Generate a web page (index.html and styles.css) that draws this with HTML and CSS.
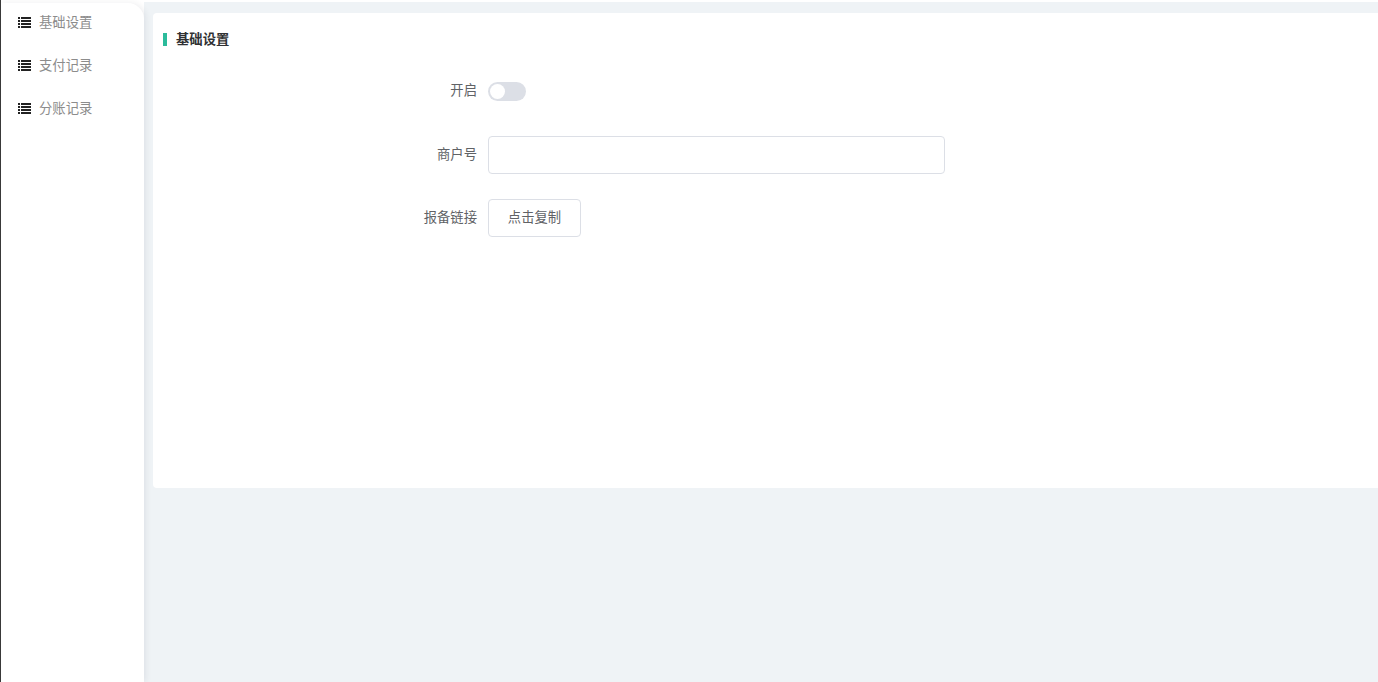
FILE: index.html
```html
<!DOCTYPE html>
<html lang="zh">
<head>
<meta charset="utf-8">
<title>基础设置</title>
<link rel="stylesheet" href="styles.css">
</head>
<body>
<div class="app">
  <aside class="sidebar">
    <a class="nav-item"><svg class="nav-icon" viewBox="0 0 13 11"><path d="M0 0h2v2H0zM3 0h10v2H3zM0 3h2v2H0zM3 3h10v2H3zM0 6h2v2H0zM3 6h10v2H3zM0 9h2v2H0zM3 9h10v2H3z"/></svg><span>基础设置</span></a>
    <a class="nav-item"><svg class="nav-icon" viewBox="0 0 13 11"><path d="M0 0h2v2H0zM3 0h10v2H3zM0 3h2v2H0zM3 3h10v2H3zM0 6h2v2H0zM3 6h10v2H3zM0 9h2v2H0zM3 9h10v2H3z"/></svg><span>支付记录</span></a>
    <a class="nav-item"><svg class="nav-icon" viewBox="0 0 13 11"><path d="M0 0h2v2H0zM3 0h10v2H3zM0 3h2v2H0zM3 3h10v2H3zM0 6h2v2H0zM3 6h10v2H3zM0 9h2v2H0zM3 9h10v2H3z"/></svg><span>分账记录</span></a>
  </aside>
  <main class="main">
    <section class="card">
      <h2 class="card-title">基础设置</h2>
      <form class="form">
        <div class="row row-switch">
          <label class="label">开启</label>
          <span class="switch"><span class="knob"></span></span>
        </div>
        <div class="row row-input">
          <label class="label">商户号</label>
          <input class="input" type="text">
        </div>
        <div class="row row-button">
          <label class="label">报备链接</label>
          <button class="button" type="button">点击复制</button>
        </div>
      </form>
    </section>
  </main>
</div>
</body>
</html>
```
FILE: styles.css
```css
* { box-sizing: border-box; }
html, body { margin: 0; height: 100%; overflow: hidden; background: #fff; }
body { font-family: "Liberation Sans", "Noto Sans CJK SC", sans-serif; font-size: 13.33px; color: #606266; }
.app { display: flex; height: 682px; padding-top: 3px; border-left: 1px solid #3a3a3a; }
.sidebar { width: 143px; flex: none; background: #fff; border-top-right-radius: 16px; position: relative; z-index: 1; box-shadow: 2px 0 6px rgba(0, 21, 41, .07); }
.nav-item { display: flex; align-items: center; height: 43px; padding-left: 17px; color: #8c8c8c; }
.nav-item span { margin-left: 8px; padding-bottom: 6px; }
.nav-icon { width: 13px; height: 11px; fill: #222; margin-top: -5px; }
.main { flex: 1; min-width: 0; background: #eff3f6; padding: 11px 0 0 9px; margin-top: -1px; }
.card { height: 475px; background: #fff; border-radius: 4px 0 0 4px; padding-top: 20px; }
.card-title { margin: 0 0 0 10px; height: 13px; line-height: 13px; padding-left: 9px; border-left: 4px solid #2bbb9b; font-size: 13.33px; font-weight: 700; color: #303133; }
.form { padding-top: 26px; }
.row { display: flex; align-items: center; }
.label { width: 335px; text-align: right; padding: 0 11px 4px 0; color: #606266; }
.row-switch { height: 38px; margin-bottom: 26px; }
.switch { display: block; width: 38px; height: 19px; border-radius: 10px; background: #dcdfe6; padding: 2px; }
.knob { display: block; width: 15px; height: 15px; border-radius: 50%; background: #fff; }
.row-input { height: 38px; margin-bottom: 25px; }
.input { width: 457px; height: 38px; border: 1px solid #dcdfe6; border-radius: 4px; background: #fff; padding: 0 12px; outline: none; }
.row-button { height: 38px; }
.button { width: 93px; height: 38px; border: 1px solid #dcdfe6; border-radius: 4px; background: #fff; color: #606266; font: inherit; padding: 0 0 4px; }
```
